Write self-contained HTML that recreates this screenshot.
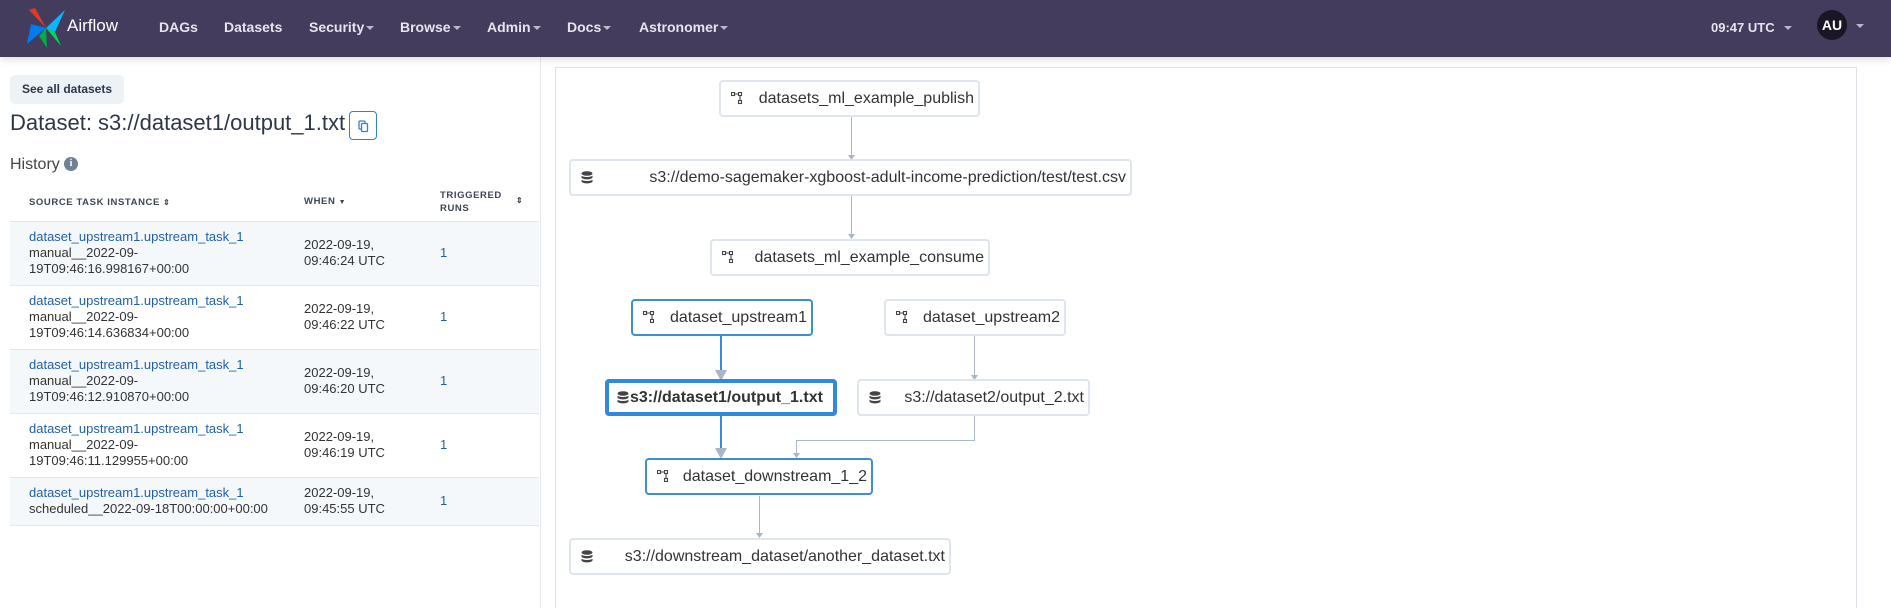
<!DOCTYPE html>
<html style="width:1891px;height:608px;overflow:hidden"><head><meta charset="utf-8"><style>
*{box-sizing:border-box;margin:0;padding:0}
body{width:1891px;height:608px;overflow:hidden;background:#fff;font-family:"Liberation Sans",Arial,sans-serif;color:#333;position:relative}
.nav{position:absolute;left:0;top:0;width:1891px;height:57px;background:#443c5c;box-shadow:0 2px 8px rgba(0,0,0,.15);z-index:2}
.nav span{position:absolute;top:19px;color:#e6e4ee;font-size:14px;font-weight:bold}
.car{display:inline-block;width:0;height:0;border-left:4px solid transparent;border-right:4px solid transparent;border-top:4px solid #bdb8cc;margin-left:2px;vertical-align:2px}
.btn{position:absolute;left:10px;top:75px;width:114px;height:29px;background:#edf2f7;border-radius:5px;font-size:12px;font-weight:bold;color:#2d3748;line-height:29px;text-align:center}
h1{position:absolute;left:10px;top:110px;font-size:22px;font-weight:normal;color:#2d3748;white-space:nowrap}
.copy{position:absolute;left:349px;top:111px;width:28px;height:29px;border:1px solid #3182ce;border-radius:4px}
.hist{position:absolute;left:10px;top:156px;font-size:16px;color:#444}
.info{position:absolute;left:64px;top:157px;width:14px;height:14px;border-radius:50%;background:#718096;color:#fff;font-size:10px;font-weight:bold;text-align:center;line-height:14px;font-family:"Liberation Serif",serif}
table{position:absolute;left:10px;top:184px;width:529px;border-collapse:collapse;font-size:13px}
th{font-size:9.5px;letter-spacing:.6px;text-align:left;color:#3d4654;font-weight:bold;padding:0 0 0 19px;height:37px;line-height:13px;vertical-align:middle}
td{padding:7.5px 0 7.5px 19px;line-height:16px;vertical-align:middle;color:#333}
tr.r{border-top:1px solid #e4e8ee}
tr.s{background:#f5f8fb}
a{color:#1f60a8;text-decoration:none}
.divider{position:absolute;left:540px;top:57px;width:1px;height:551px;background:#e6e8ec}
.graph{position:absolute;left:555px;top:67px;width:1302px;height:541px;border:1px solid #dde2e8;border-bottom:none}
.n{position:absolute;height:37px;border:2px solid #dfe5ec;border-radius:4px;background:#fff;display:flex;align-items:center;justify-content:space-between;padding:0 4px 0 10px;font-size:16px;color:#333;white-space:nowrap}
.n.b{border-color:#3b8fd9}
.n.bb{border:4px solid #3289d9;font-weight:bold;justify-content:flex-start;padding-left:8px}
svg.i{flex:none}
.e{position:absolute;background:#a9b6c6}
</style></head><body>
<div class="nav">
<svg style="position:absolute;left:25px;top:6px" width="42" height="44" viewBox="0 0 42 44">
<polygon points="21,22 4,4 10,2" fill="#e43921"/>
<polygon points="21,22 40,4 30,26" fill="#0cb6ff"/>
<polygon points="21,22 22,42 14,30" fill="#00ad46"/>
<polygon points="21,22 2,38 6,18" fill="#017cee"/>
<polygon points="21,22 30,26 36,40" fill="#04d659"/>
</svg>
<span style="left:67px;top:16px;font-weight:normal;font-size:17px;color:#fff">Airflow</span>
<span style="left:159px">DAGs</span>
<span style="left:224px">Datasets</span>
<span style="left:309px">Security<i class="car"></i></span>
<span style="left:400px">Browse<i class="car"></i></span>
<span style="left:487px">Admin<i class="car"></i></span>
<span style="left:567px">Docs<i class="car"></i></span>
<span style="left:639px">Astronomer<i class="car"></i></span>
<span style="left:1711px;font-size:13px;top:20px">09:47 UTC <i class="car" style="margin-left:6px"></i></span>
<div style="position:absolute;left:1817px;top:10px;width:30px;height:30px;border-radius:50%;background:#1a1625;color:#fff;font-weight:bold;font-size:14px;text-align:center;line-height:30px">AU</div>
<i class="car" style="position:absolute;left:1854px;top:24px"></i>
</div>
<div class="btn">See all datasets</div>
<h1>Dataset: s3://dataset1/output_1.txt</h1>
<div class="copy"><svg width="26" height="27" viewBox="0 0 26 27"><rect x="9" y="9" width="6" height="8" rx="1" fill="none" stroke="#3182ce" stroke-width="1.3"/><rect x="11.5" y="11.5" width="6" height="8" rx="1" fill="#fff" stroke="#3182ce" stroke-width="1.3"/></svg></div>
<div class="hist">History</div><div class="info">i</div>
<table>
<tr><th style="width:275px">SOURCE TASK INSTANCE <span style="font-size:8px">&#8661;</span></th><th style="width:136px">WHEN <span style="font-size:7px">&#9660;</span></th><th>TRIGGERED<br>RUNS <span style="position:absolute;left:506px;top:10px;font-size:8px">&#8661;</span></th></tr>
<tr class="r s"><td><a>dataset_upstream1.upstream_task_1</a><br>manual__2022-09-<br>19T09:46:16.998167+00:00</td><td>2022-09-19,<br>09:46:24 UTC</td><td><a>1</a></td></tr>
<tr class="r"><td><a>dataset_upstream1.upstream_task_1</a><br>manual__2022-09-<br>19T09:46:14.636834+00:00</td><td>2022-09-19,<br>09:46:22 UTC</td><td><a>1</a></td></tr>
<tr class="r s"><td><a>dataset_upstream1.upstream_task_1</a><br>manual__2022-09-<br>19T09:46:12.910870+00:00</td><td>2022-09-19,<br>09:46:20 UTC</td><td><a>1</a></td></tr>
<tr class="r"><td><a>dataset_upstream1.upstream_task_1</a><br>manual__2022-09-<br>19T09:46:11.129955+00:00</td><td>2022-09-19,<br>09:46:19 UTC</td><td><a>1</a></td></tr>
<tr class="r s" style="border-bottom:1px solid #e4e8ee"><td><a>dataset_upstream1.upstream_task_1</a><br>scheduled__2022-09-18T00:00:00+00:00</td><td>2022-09-19,<br>09:45:55 UTC</td><td><a>1</a></td></tr>
</table>
<div class="divider"></div>
<div class="graph"></div>

<div class="e" style="left:851px;top:116px;width:1px;height:40px"></div>
<div class="e" style="left:851px;top:195px;width:1px;height:41px"></div>
<div class="e" style="left:720px;top:336px;width:2px;height:36px;background:#3a8bd6"></div>
<div class="e" style="left:974px;top:336px;width:1px;height:41px"></div>
<div class="e" style="left:720px;top:416px;width:2px;height:34px;background:#3a8bd6"></div>
<div class="e" style="left:974px;top:416px;width:1px;height:24px"></div>
<div class="e" style="left:796px;top:440px;width:179px;height:1px"></div>
<div class="e" style="left:796px;top:440px;width:1px;height:15px"></div>
<div class="e" style="left:759px;top:496px;width:1px;height:39px"></div>
<svg style="position:absolute;left:0;top:0" width="1891" height="608">
<g fill="#a9b6c6">
<polygon points="848,155 855,155 851.5,160"/>
<polygon points="848,234 855,234 851.5,239"/>
<polygon points="971,375 978,375 974.5,380"/>
<polygon points="793,453 800,453 796.5,458"/>
<polygon points="756,533 763,533 759.5,538"/>
<polygon points="715,370 727,370 721,381"/>
<polygon points="715,448 727,448 721,459"/>
</g></svg>

<div class="n" style="left:719px;top:80px;width:261px"><svg class="i" width="12" height="13" viewBox="0 0 12 13" fill="none" stroke="#444" stroke-width="1.1"><rect x=".5" y=".5" width="3" height="3"/><rect x="7.5" y=".5" width="3" height="3"/><rect x="7.5" y="8.5" width="3" height="3"/><path d="M3.5 2H7.5M9 3.5V8.5"/></svg><span>datasets_ml_example_publish</span></div>
<div class="n" style="left:569px;top:159px;width:563px"><svg class="i" width="12" height="14" viewBox="0 0 12 14" fill="#444"><ellipse cx="6" cy="2.5" rx="5.5" ry="2.3"/><path d="M.5 4.5c1 2 10 2 11 0v2c-1 2.5-10 2.5-11 0zM.5 8.5c1 2 10 2 11 0v2c-1 2.5-10 2.5-11 0z"/></svg><span>s3://demo-sagemaker-xgboost-adult-income-prediction/test/test.csv</span></div>
<div class="n" style="left:710px;top:239px;width:280px"><svg class="i" width="12" height="13" viewBox="0 0 12 13" fill="none" stroke="#444" stroke-width="1.1"><rect x=".5" y=".5" width="3" height="3"/><rect x="7.5" y=".5" width="3" height="3"/><rect x="7.5" y="8.5" width="3" height="3"/><path d="M3.5 2H7.5M9 3.5V8.5"/></svg><span>datasets_ml_example_consume</span></div>
<div class="n b" style="left:631px;top:299px;width:182px"><svg class="i" width="12" height="13" viewBox="0 0 12 13" fill="none" stroke="#444" stroke-width="1.1"><rect x=".5" y=".5" width="3" height="3"/><rect x="7.5" y=".5" width="3" height="3"/><rect x="7.5" y="8.5" width="3" height="3"/><path d="M3.5 2H7.5M9 3.5V8.5"/></svg><span>dataset_upstream1</span></div>
<div class="n" style="left:884px;top:299px;width:182px"><svg class="i" width="12" height="13" viewBox="0 0 12 13" fill="none" stroke="#444" stroke-width="1.1"><rect x=".5" y=".5" width="3" height="3"/><rect x="7.5" y=".5" width="3" height="3"/><rect x="7.5" y="8.5" width="3" height="3"/><path d="M3.5 2H7.5M9 3.5V8.5"/></svg><span>dataset_upstream2</span></div>
<div class="n bb" style="left:605px;top:379px;width:232px"><svg class="i" width="12" height="14" viewBox="0 0 12 14" fill="#444"><ellipse cx="6" cy="2.5" rx="5.5" ry="2.3"/><path d="M.5 4.5c1 2 10 2 11 0v2c-1 2.5-10 2.5-11 0zM.5 8.5c1 2 10 2 11 0v2c-1 2.5-10 2.5-11 0z"/></svg><span style="margin-left:1px">s3://dataset1/output_1.txt</span></div>
<div class="n" style="left:857px;top:379px;width:233px"><svg class="i" width="12" height="14" viewBox="0 0 12 14" fill="#444"><ellipse cx="6" cy="2.5" rx="5.5" ry="2.3"/><path d="M.5 4.5c1 2 10 2 11 0v2c-1 2.5-10 2.5-11 0zM.5 8.5c1 2 10 2 11 0v2c-1 2.5-10 2.5-11 0z"/></svg><span>s3://dataset2/output_2.txt</span></div>
<div class="n b" style="left:645px;top:458px;width:228px"><svg class="i" width="12" height="13" viewBox="0 0 12 13" fill="none" stroke="#444" stroke-width="1.1"><rect x=".5" y=".5" width="3" height="3"/><rect x="7.5" y=".5" width="3" height="3"/><rect x="7.5" y="8.5" width="3" height="3"/><path d="M3.5 2H7.5M9 3.5V8.5"/></svg><span>dataset_downstream_1_2</span></div>
<div class="n" style="left:569px;top:538px;width:382px"><svg class="i" width="12" height="14" viewBox="0 0 12 14" fill="#444"><ellipse cx="6" cy="2.5" rx="5.5" ry="2.3"/><path d="M.5 4.5c1 2 10 2 11 0v2c-1 2.5-10 2.5-11 0zM.5 8.5c1 2 10 2 11 0v2c-1 2.5-10 2.5-11 0z"/></svg><span>s3://downstream_dataset/another_dataset.txt</span></div>
</body></html>
